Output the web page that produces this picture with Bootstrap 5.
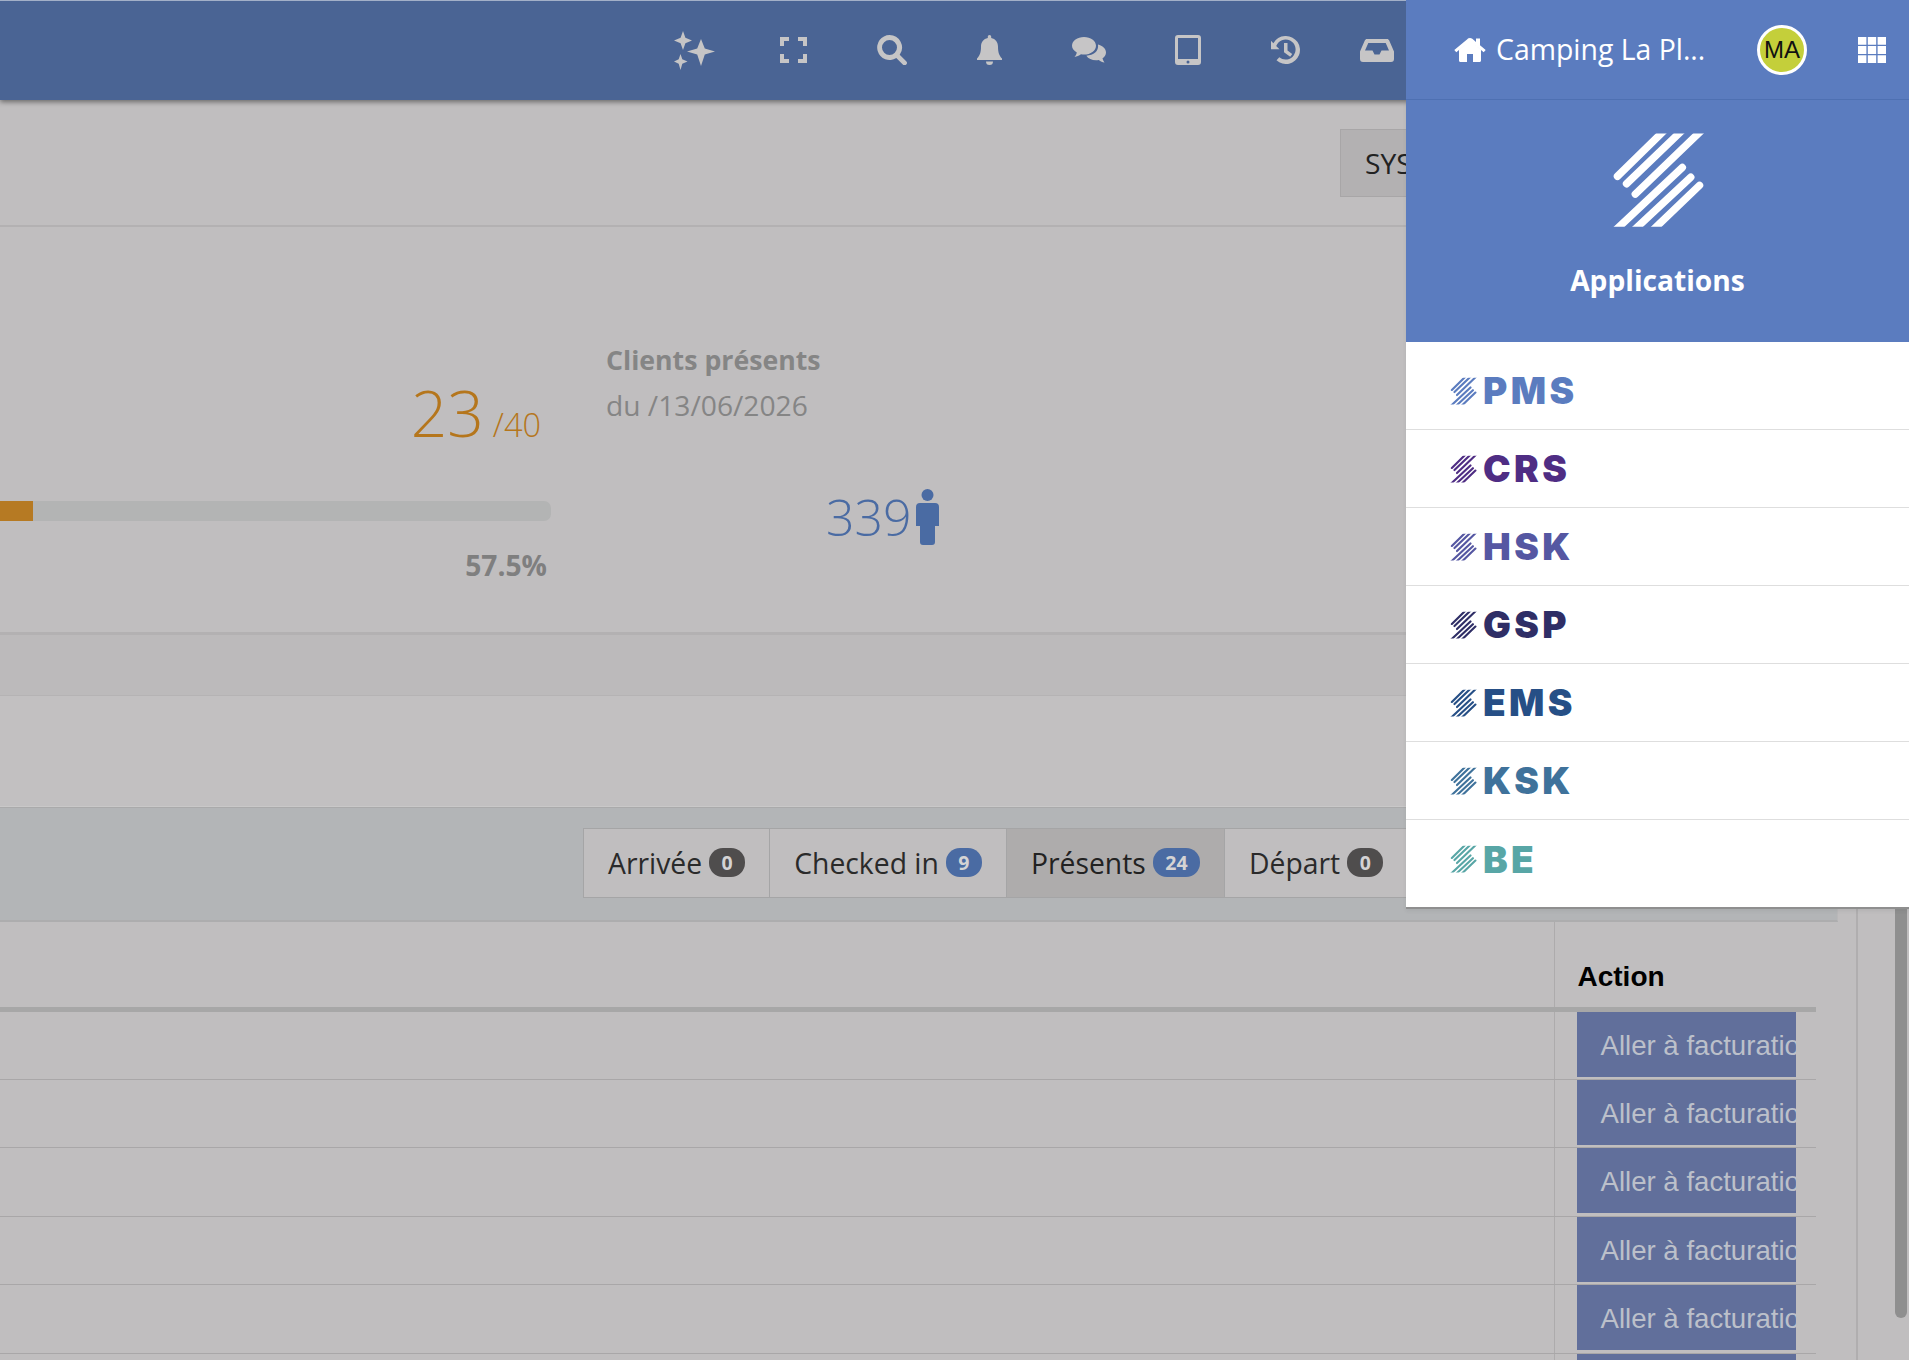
<!doctype html>
<html lang="fr">
<head>
<meta charset="utf-8">
<title>Camping La Pl...</title>
<link href="https://cdn.jsdelivr.net/npm/bootstrap@5.3.0/dist/css/bootstrap.min.css" rel="stylesheet">
<style>
html,body{height:1360px;overflow:hidden}
body{background:#c0bebf;font-family:"Open Sans","Liberation Sans",sans-serif;color:#2b2b2b;position:relative}
.topbar{height:100px;background:#4a6494;box-shadow:0 2px 5px rgba(0,0,0,.45),inset 0 1px 0 #a3b0c8;position:relative;z-index:2}
.ico{fill:#c6c5c6;display:block}
.t1{margin-left:674px}
.site{width:503px;height:100px;background:#5b7cbf;color:#fff;border-bottom:1px solid #4f71b4;padding-left:48px;flex:none}
.site .name{font-size:28.400px;line-height:1;margin-left:10px;width:208px;white-space:nowrap}
.avatar{width:50px;height:50px;border-radius:50%;background:#c4cf3a;border:3px solid #fff;color:#111;font:24px/44px "Liberation Sans",sans-serif;text-align:center;margin-left:53px}
.apps{position:absolute;top:100px;right:0;width:503px;background:#fff;border-bottom:2px solid #8f8f8f;z-index:3}
.apps-head{height:242px;background:#5b7cbf;color:#fff;padding-top:31px}
.apps-head div{font-size:28.200px;font-weight:700;line-height:1;margin-top:37px}
.apps .list-group{padding:10px 0 9px}
.apps .list-group-item{height:78px;padding:0 0 0 44px;border-color:#dedede;background:none}
.apps .list-group-item span{font:900 37px/1 Inter,"Liberation Sans",sans-serif;letter-spacing:3.400px;margin-left:6px}
.main{width:1858px;height:1260px;border-right:2px solid #b0aeaf;padding-right:18px;flex:none}
.subhead{height:127px;border-bottom:2px solid #b3b1b2;padding:29px 0 0 1340px}
.subhead .btn{height:68px;width:240px;background:#b3b1b2;border:1px solid #a8a6a7;border-radius:0;color:#222;font-size:28.200px;text-align:left;padding:0 24px}
.stats{height:408px;border-bottom:3px solid #b3b1b2}
.occ{width:551px;padding-top:154px}
.occ .num{color:#b5761c;font-size:64px;font-weight:300;line-height:64px;padding-right:10px;white-space:nowrap}
.occ .num small{font-size:32.500px;margin-left:9px}
.occ .progress{height:20px;background:#b3b4b4;border-radius:0 7px 7px 0;margin-top:44px}
.occ .progress-bar{background:#b67a23}
.occ .pct{color:#7f7f7f;font-size:28.200px;font-weight:700;line-height:1;margin-top:30px;padding-right:4px}
.pres{width:360px;margin-left:55px;padding-top:116px;color:#858585}
.pres h2{font-size:26.700px;font-weight:700;line-height:34px;margin:0}
.pres p{font-size:28.200px;font-weight:400;line-height:36px;margin:10px 0 0}
.pres .cnt{color:#4a6ba3;font-size:50px;font-weight:300;line-height:60px;margin:64px 0 0 220px;width:140px}
.band1{height:61px;background:#bcbabb;border-bottom:1px solid #b5b3b4}
.band2{height:111px;background:#c2c0c1;border-bottom:1px solid #c9c8c8}
.toolbar{height:115px;background:#b3b5b7;padding:20px 0 0 583px;border-top:1px solid #aaaaab;border-right:1px solid #b9b8b9;border-bottom:2px solid #adadae}
.toolbar .btn{height:70px;background:#c0bebf;border:1px solid #a5a5a6;border-radius:0;color:#2a2a2a;font-size:28.300px;line-height:1;padding:0 24px;display:flex;align-items:center;gap:7px;flex:none}
.toolbar .btn.active{background:#aeacac;color:#222;border-color:#a5a5a6}
.toolbar .badge{font-size:19.500px;font-weight:700;height:29px;padding:4px 12.500px;border-radius:14px;color:#d4d3d4;line-height:21px}
.b-dark{background:#4f4d4d}.b-blue{background:#4a6ba3}
.tbl{width:1816px;margin:0;border-collapse:collapse;--bs-table-bg:transparent;font-family:"Liberation Sans",sans-serif}
.tbl th{height:87.500px;border-bottom:5px solid #a7a7a7!important;font-size:28px;font-weight:700;color:#000;padding:0 0 12px 23px;vertical-align:bottom;line-height:1.300}
.tbl td{height:68.400px;padding:0 0 2px 22px;border-bottom:1px solid #a9a7a8;vertical-align:top}
.tbl .sep{border-right:1px solid #adabac;padding:0}
.tbl .a{width:262px}
.tbl .go{display:block;width:219px;height:65px;background:#616f9b;color:#bcc0ca;font-size:27.600px;line-height:65px;padding-left:24px;overflow:hidden;white-space:nowrap;border:0;border-radius:0;text-align:left}
.track{flex:1 1 auto;padding:12px 2px 0 0}
.thumb{width:12px;height:1206px;background:#8f8f8f;border-radius:0 0 6px 6px}
</style>
</head>
<body>
<svg width="0" height="0" class="position-absolute">
  <defs>
    <clipPath id="lc"><rect x="620" y="398" width="310" height="288"/></clipPath>
    <symbol id="logo" viewBox="630 395 290 293">
      <g clip-path="url(#lc)" fill="none" stroke="currentColor" stroke-width="23" stroke-linecap="round">
        <path d="M800 383 650 530M855 383 678 553M915 383 705 585M850 503 640 700M876 533 697 700M903 558 755 700"/>
      </g>
    </symbol>
  </defs>
</svg>

<nav class="topbar d-flex align-items-center">
  <div class="d-flex align-items-center flex-grow-1">
    <svg class="ico t1" width="41" height="39" viewBox="0 0 41 39"><path d="M9 0l2.400 6.800L18 9.500l-6.600 2.700L9 19l-2.400-6.800L0 9.500l6.600-2.700zM27 8l3.800 9.400L41 20.500l-10.200 3.100L27 35l-3.800-11.400L13 20.500l10.200-3.100zM6.500 23l1.800 5.200 5.200 2.300-5.200 2.300L6.500 39l-1.800-6.200L0 30.500l4.700-2.300z"/></svg>
    <svg class="ico" style="margin-left:65px" width="27" height="26" viewBox="0 0 27 26"><path d="M0 0h9v4H4v5H0zM18 0h9v9h-4V4h-5zM0 17h4v5h5v4H0zM23 17h4v9h-9v-4h5z"/></svg>
    <svg class="ico" style="margin-left:70px" width="30" height="30" viewBox="0 0 30 30"><path fill-rule="evenodd" d="M12.500 0a12.500 12.500 0 0 1 10.200 19.700l6.500 6.500a2.400 2.400 0 0 1-3.400 3.400l-6.500-6.500A12.500 12.500 0 1 1 12.500 0zm0 5a7.500 7.500 0 1 0 0 15 7.500 7.500 0 0 0 0-15z"/></svg>
    <svg class="ico" style="margin-left:70px" width="25" height="30" viewBox="0 0 25 30"><path d="M12.500 0c1 0 1.700.7 1.700 1.800v1.100C18.500 3.800 21 7 21 11.500c0 6 1.300 9.300 4 12v1.500H0v-1.500c2.700-2.700 4-6 4-12 0-4.500 2.500-7.700 6.800-8.600V1.800C10.800.7 11.500 0 12.500 0zM9 26.500h7a3.500 3.500 0 0 1-7 0z"/></svg>
    <svg class="ico" style="margin-left:70px" width="34" height="26" viewBox="0 0 34 26"><path d="M12 0c6.600 0 12 3.700 12 8.800s-5.400 8.800-12 8.800c-1 0-2 0-3-.3C7 18.800 4.800 19.700 2.500 20c1.100-1.300 2-2.800 2.300-4.600C1.900 13.700 0 11.400 0 8.800 0 3.700 5.400 0 12 0zM26 7.500c4.500 1.100 8 4 8 8 0 2.400-1.400 4.400-3.500 5.800.3 1.600 1 3 2 4.200-2-.3-4-1.100-5.700-2.500-1 .2-1.800.3-2.800.3-4.200 0-7.900-1.800-9.600-4.600C21.500 18 27 14.500 26 7.500z"/></svg>
    <svg class="ico" style="margin-left:69px" width="26" height="30" viewBox="0 0 26 30"><path fill-rule="evenodd" d="M3 0h20a3 3 0 0 1 3 3v24a3 3 0 0 1-3 3H3a3 3 0 0 1-3-3V3a3 3 0 0 1 3-3zm0 3v21h20V3zm10 22.500a1.500 1.500 0 1 0 0 3 1.500 1.500 0 0 0 0-3z"/></svg>
    <svg class="ico" style="margin-left:70px" width="29" height="28" viewBox="0 0 29 28"><path d="M15 0a14 14 0 1 1-9.500 24.300l2.800-3A10 10 0 1 0 5.200 10l3.300 3.300H0V4.800l2.400 2.400A14 14 0 0 1 15 0zm-2 7h3.500v7.500l4.700 3.500-2 2.800-6.200-4.600z"/></svg>
    <svg class="ico" style="margin-left:60px" width="34" height="23" viewBox="0 0 34 23"><path fill-rule="evenodd" d="M7 0h20c1 0 1.800.6 2.200 1.500L34 12.500V20a3 3 0 0 1-3 3H3a3 3 0 0 1-3-3v-7.500l4.800-11C5.200.6 6 0 7 0zm1.300 4L5 11.500h7.500l2 4h5l2-4H29L25.700 4z"/></svg>
  </div>
  <div class="site d-flex align-items-center">
    <svg width="32" height="25" viewBox="0 0 32 25" fill="#fff"><path d="M16 3.800 5 13v10.500c0 .8.600 1.500 1.500 1.500h6.500v-8h6v8h6.500c.9 0 1.500-.7 1.500-1.500V13zM16 0 .3 13l2 2.300L16 3.800l13.700 11.500 2-2.300L26 8.300V1.500h-4v3.400L18.300 1.800C17 .6 15 .6 13.700 1.800z"/></svg>
    <span class="name">Camping La Pl...</span>
    <span class="avatar">MA</span>
    <svg style="margin-left:51px" width="28" height="26" viewBox="0 0 28 26" fill="#fff"><path d="M0 0h8.400v7.800H0zM9.800 0h8.400v7.800H9.800zM19.600 0H28v7.800h-8.400zM0 9.100h8.400v7.800H0zM9.800 9.100h8.400v7.800H9.800zM19.600 9.100H28v7.800h-8.400zM0 18.200h8.400V26H0zM9.800 18.200h8.400V26H9.800zM19.600 18.200H28V26h-8.400z"/></svg>
  </div>
</nav>

<aside class="apps shadow-sm">
  <div class="apps-head text-center">
    <svg width="94" height="98" class="d-block mx-auto" style="color:#fff"><use href="#logo"/></svg>
    <div>Applications</div>
  </div>
  <div class="list-group list-group-flush">
    <a class="list-group-item d-flex align-items-center" style="color:#5b7cbf"><svg width="27" height="28"><use href="#logo"/></svg><span>PMS</span></a>
    <a class="list-group-item d-flex align-items-center" style="color:#4f2d84"><svg width="27" height="28"><use href="#logo"/></svg><span>CRS</span></a>
    <a class="list-group-item d-flex align-items-center" style="color:#5557a2"><svg width="27" height="28"><use href="#logo"/></svg><span>HSK</span></a>
    <a class="list-group-item d-flex align-items-center" style="color:#2f2e66"><svg width="27" height="28"><use href="#logo"/></svg><span>GSP</span></a>
    <a class="list-group-item d-flex align-items-center" style="color:#264f86"><svg width="27" height="28"><use href="#logo"/></svg><span>EMS</span></a>
    <a class="list-group-item d-flex align-items-center" style="color:#3f729b"><svg width="27" height="28"><use href="#logo"/></svg><span>KSK</span></a>
    <a class="list-group-item d-flex align-items-center" style="color:#58a6a6"><svg width="27" height="28"><use href="#logo"/></svg><span>BE</span></a>
  </div>
</aside>

<div class="d-flex">
  <main class="main">
    <div class="subhead"><button class="btn">SYSTÈME</button></div>
    <section class="stats d-flex">
      <div class="occ">
        <div class="num text-end">23<small>/40</small></div>
        <div class="progress"><div class="progress-bar" style="width:6%"></div></div>
        <div class="pct text-end">57.5%</div>
      </div>
      <div class="pres">
        <h2>Clients présents</h2>
        <p>du /13/06/2026</p>
        <div class="cnt d-flex align-items-center gap-1">339
          <svg width="23" height="56" viewBox="0 0 23 56" fill="#4a6ba3"><circle cx="11.500" cy="6" r="6"/><path d="M4 14h15a4 4 0 0 1 4 4v19h-4v16a3 3 0 0 1-3 3H7a3 3 0 0 1-3-3V37H0V18a4 4 0 0 1 4-4z"/></svg>
        </div>
      </div>
    </section>
    <div class="band1"></div>
    <div class="band2"></div>
    <div class="toolbar">
      <div class="btn-group">
        <button class="btn">Arrivée <span class="badge b-dark">0</span></button>
        <button class="btn">Checked in <span class="badge b-blue">9</span></button>
        <button class="btn active">Présents <span class="badge b-blue">24</span></button>
        <button class="btn">Départ <span class="badge b-dark">0</span></button>
      </div>
    </div>
    <table class="table tbl">
      <thead><tr><th class="sep"></th><th class="a">Action</th></tr></thead>
      <tbody>
        <tr><td class="sep"></td><td class="a"><button class="go">Aller à facturation</button></td></tr>
        <tr><td class="sep"></td><td class="a"><button class="go">Aller à facturation</button></td></tr>
        <tr><td class="sep"></td><td class="a"><button class="go">Aller à facturation</button></td></tr>
        <tr><td class="sep"></td><td class="a"><button class="go">Aller à facturation</button></td></tr>
        <tr><td class="sep"></td><td class="a"><button class="go">Aller à facturation</button></td></tr>
        <tr><td class="sep"></td><td class="a"><button class="go">Aller à facturation</button></td></tr>
      </tbody>
    </table>
  </main>
  <div class="track d-flex justify-content-end align-items-start"><div class="thumb"></div></div>
</div>
<script src="https://cdn.jsdelivr.net/npm/bootstrap@5.3.0/dist/js/bootstrap.bundle.min.js"></script>
</body>
</html>
